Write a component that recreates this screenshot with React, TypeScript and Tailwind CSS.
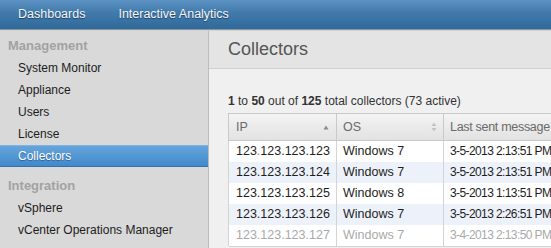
import React from 'react'

const rows = [
  { ip: '123.123.123.123', os: 'Windows 7', last: '3-5-2013 2:13:51 PM', alt: false, dim: false },
  { ip: '123.123.123.124', os: 'Windows 7', last: '3-5-2013 2:13:51 PM', alt: true, dim: false },
  { ip: '123.123.123.125', os: 'Windows 8', last: '3-5-2013 1:13:51 PM', alt: false, dim: false },
  { ip: '123.123.123.126', os: 'Windows 7', last: '3-5-2013 2:26:51 PM', alt: true, dim: false },
  { ip: '123.123.123.127', os: 'Windows 7', last: '3-4-2013 2:13:50 PM', alt: false, dim: true },
]

const management = ['System Monitor', 'Appliance', 'Users', 'License', 'Collectors']
const integration = ['vSphere', 'vCenter Operations Manager']

function SortUp() {
  return (
    <svg width="6" height="5" viewBox="0 0 6 5">
      <path d="M3 0.5 L5.5 4.5 L0.5 4.5 Z" fill="#8a8a8a" />
    </svg>
  )
}

function SortBoth() {
  return (
    <svg width="6" height="10" viewBox="0 0 6 10">
      <path d="M3 0.5 L5.5 4 L0.5 4 Z" fill="#c4c4c4" />
      <path d="M3 9.5 L5.5 6 L0.5 6 Z" fill="#c4c4c4" />
    </svg>
  )
}

function NavItem({ label, active }: { label: string; active?: boolean }) {
  if (active) {
    return (
      <div className="h-[22px] flex items-center pl-[18px] text-white bg-[linear-gradient(to_bottom,#66a5dc,#4189cb)] border-t border-[#7fb3e0] border-b border-b-[#3471ad] [text-shadow:0_1px_1px_rgba(0,0,0,0.35)]">
        {label}
      </div>
    )
  }
  return <div className="h-[22px] flex items-center pl-[18px] text-[#1c1c1c]">{label}</div>
}

export default function App() {
  return (
    <div className="w-[551px] h-[248px] overflow-hidden flex flex-col font-['Liberation_Sans',Arial,sans-serif] bg-[#f0f0f0]">
      <header className="h-[29px] shrink-0 flex items-center gap-[33px] pl-[18px] bg-[linear-gradient(to_bottom,#5c92c4,#4179ab_45%,#2f6a9b)] text-[12.5px] text-[#f4f6f8] [text-shadow:0_1px_1px_rgba(0,0,0,0.45)]">
        <span>Dashboards</span>
        <span>Interactive Analytics</span>
      </header>
      <div className="h-[1px] shrink-0 bg-[#8e959c]" />
      <div className="h-[1px] shrink-0 bg-[#d2d2d2]" />

      <div className="flex flex-1 min-h-0">
        <aside className="w-[209px] shrink-0 bg-[#d9d9d9] border-r border-[#bdbdbd] pt-[4px] text-[12px]">
          <div className="h-[22px] flex items-center pl-[8px] text-[13px] font-bold text-[#a2a2a2]">Management</div>
          {management.map((m) => (
            <NavItem key={m} label={m} active={m === 'Collectors'} />
          ))}
          <div className="h-[22px] mt-[8px] flex items-center pl-[8px] text-[13px] font-bold text-[#a2a2a2]">Integration</div>
          {integration.map((m) => (
            <NavItem key={m} label={m} />
          ))}
        </aside>

        <main className="flex-1 min-w-0 overflow-hidden">
          <div className="h-[38px] flex items-center pl-[19px] bg-[#e4e4e4] border-b border-[#d0d0d0] text-[18px] text-[#555]">
            Collectors
          </div>
          <div className="pl-[19px] pt-[24px]">
            <p className="text-[12px] leading-[16px] text-[#333]">
              <b>1</b> to <b>50</b> out of <b>125</b> total collectors (73 active)
            </p>
            <table className="mt-[4px] border-collapse text-[12.5px] w-[360px] table-fixed">
              <thead>
                <tr className="h-[27px] bg-[linear-gradient(to_bottom,#f4f4f4,#e1e1e1)] text-[#6a6a6a] text-left">
                  <th className="w-[108px] border border-[#c9c9c9] px-[7px] font-normal">
                    <div className="flex items-center justify-between">
                      <span>IP</span>
                      <SortUp />
                    </div>
                  </th>
                  <th className="w-[107px] border border-[#c9c9c9] px-[6px] font-normal">
                    <div className="flex items-center justify-between">
                      <span>OS</span>
                      <SortBoth />
                    </div>
                  </th>
                  <th className="border border-[#c9c9c9] px-[6px] font-normal whitespace-nowrap tracking-[-0.3px]">Last sent message</th>
                </tr>
              </thead>
              <tbody>
                {rows.map((r, i) => (
                  <tr
                    key={r.ip}
                    className={`h-[21px] ${r.alt ? 'bg-[#edf2fa]' : 'bg-white'} ${r.dim ? 'text-[#a9a9a9]' : 'text-[#1e1e1e]'}`}
                  >
                    <td className="border-x border-[#d4d4d4] px-[7px] whitespace-nowrap">
                      {i === 0 ? (
                        <>
                          123<span className="text-[#d0701e]">.</span>123.123.123
                        </>
                      ) : (
                        r.ip
                      )}
                    </td>
                    <td className="border-x border-[#d4d4d4] px-[6px] whitespace-nowrap">{r.os}</td>
                    <td className="border-x border-[#d4d4d4] px-[6px] whitespace-nowrap text-[12px] tracking-[-0.6px]">{r.last}</td>
                  </tr>
                ))}
                <tr className="h-[1px]">
                  <td colSpan={3} className="p-0 h-[1px] bg-[#d4d4d4]" />
                </tr>
              </tbody>
            </table>
          </div>
        </main>
      </div>
    </div>
  )
}
